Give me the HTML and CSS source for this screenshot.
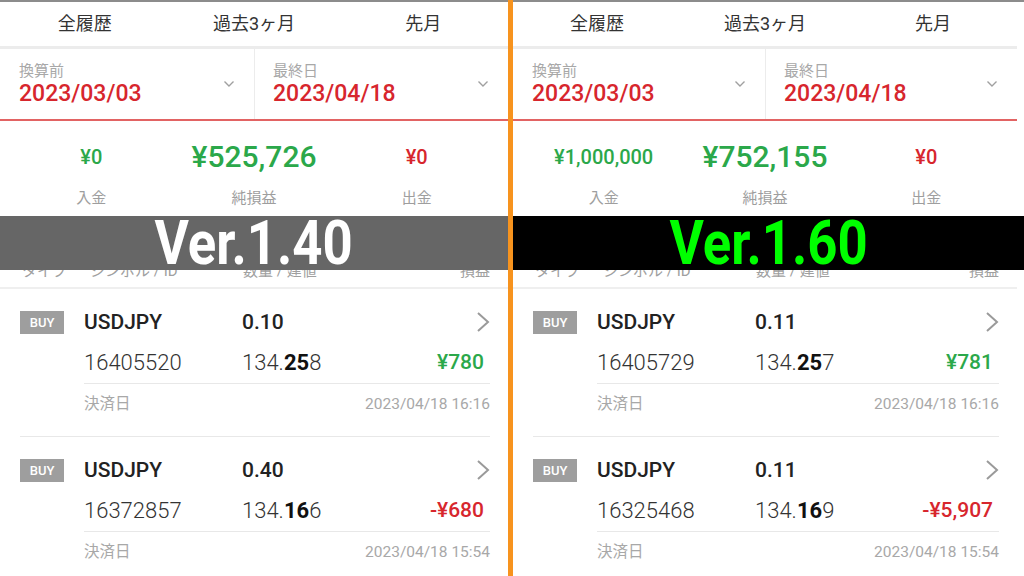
FILE: index.html
```html
<!DOCTYPE html>
<html lang="ja">
<head>
    <meta charset="UTF-8">
    <title>取引履歴 Ver.1.40 / Ver.1.60</title>
    <link rel="stylesheet" href="styles.css">
</head>
<body>
    <div class="screen">
        <section class="panel panel-left">
            <nav class="tabs">
                <span>全履歴</span>
                <span>過去3ヶ月</span>
                <span>先月</span>
            </nav>
            <div class="range">
                <div class="range-item">
                    <div class="range-text">
                        <span class="range-label">換算前</span>
                        <span class="range-date">2023/03/03</span>
                    </div>
                    <svg class="caret" width="10" height="6" viewBox="0 0 10 6"><polyline points="0.5,0.5 5,5 9.5,0.5"/></svg>
                </div>
                <div class="range-item">
                    <div class="range-text">
                        <span class="range-label">最終日</span>
                        <span class="range-date">2023/04/18</span>
                    </div>
                    <svg class="caret" width="10" height="6" viewBox="0 0 10 6"><polyline points="0.5,0.5 5,5 9.5,0.5"/></svg>
                </div>
            </div>
            <div class="summary">
                <div class="summary-col">
                    <span class="amount green">¥0</span>
                    <span class="summary-label">入金</span>
                </div>
                <div class="summary-col">
                    <span class="amount big green">¥525,726</span>
                    <span class="summary-label">純損益</span>
                </div>
                <div class="summary-col">
                    <span class="amount red">¥0</span>
                    <span class="summary-label">出金</span>
                </div>
            </div>
            <div class="list-head">
                <span class="head-type">タイプ</span>
                <span class="head-symbol">シンボル / ID</span>
                <span class="head-qty">数量 / 建値</span>
                <span>損益</span>
            </div>

            <div class="trade">
                <span class="badge">BUY</span>
                <div class="trade-body">
                    <div class="line1">
                        <span class="symbol">USDJPY</span>
                        <span class="qty">0.10</span>
                        <svg class="arrow" width="14" height="22" viewBox="0 0 14 22"><polyline points="2,2 12,11 2,20"/></svg>
                    </div>
                    <div class="line2">
                        <span class="trade-id">16405520</span>
                        <span class="price">134.<b>25</b>8</span>
                        <span class="profit green">¥780</span>
                    </div>
                    <div class="line3">
                        <span>決済日</span>
                        <span>2023/04/18 16:16</span>
                    </div>
                </div>
            </div>

            <div class="trade">
                <span class="badge">BUY</span>
                <div class="trade-body">
                    <div class="line1">
                        <span class="symbol">USDJPY</span>
                        <span class="qty">0.40</span>
                        <svg class="arrow" width="14" height="22" viewBox="0 0 14 22"><polyline points="2,2 12,11 2,20"/></svg>
                    </div>
                    <div class="line2">
                        <span class="trade-id">16372857</span>
                        <span class="price">134.<b>16</b>6</span>
                        <span class="profit red">-¥680</span>
                    </div>
                    <div class="line3">
                        <span>決済日</span>
                        <span>2023/04/18 15:54</span>
                    </div>
                </div>
            </div>

            <div class="banner banner-old"><span>Ver.1.40</span></div>
        </section>

        <div class="divider"></div>

        <section class="panel panel-right">
            <nav class="tabs">
                <span>全履歴</span>
                <span>過去3ヶ月</span>
                <span>先月</span>
            </nav>
            <div class="range">
                <div class="range-item">
                    <div class="range-text">
                        <span class="range-label">換算前</span>
                        <span class="range-date">2023/03/03</span>
                    </div>
                    <svg class="caret" width="10" height="6" viewBox="0 0 10 6"><polyline points="0.5,0.5 5,5 9.5,0.5"/></svg>
                </div>
                <div class="range-item">
                    <div class="range-text">
                        <span class="range-label">最終日</span>
                        <span class="range-date">2023/04/18</span>
                    </div>
                    <svg class="caret" width="10" height="6" viewBox="0 0 10 6"><polyline points="0.5,0.5 5,5 9.5,0.5"/></svg>
                </div>
            </div>
            <div class="summary">
                <div class="summary-col">
                    <span class="amount green">¥1,000,000</span>
                    <span class="summary-label">入金</span>
                </div>
                <div class="summary-col">
                    <span class="amount big green">¥752,155</span>
                    <span class="summary-label">純損益</span>
                </div>
                <div class="summary-col">
                    <span class="amount red">¥0</span>
                    <span class="summary-label">出金</span>
                </div>
            </div>
            <div class="list-head">
                <span class="head-type">タイプ</span>
                <span class="head-symbol">シンボル / ID</span>
                <span class="head-qty">数量 / 建値</span>
                <span>損益</span>
            </div>

            <div class="trade">
                <span class="badge">BUY</span>
                <div class="trade-body">
                    <div class="line1">
                        <span class="symbol">USDJPY</span>
                        <span class="qty">0.11</span>
                        <svg class="arrow" width="14" height="22" viewBox="0 0 14 22"><polyline points="2,2 12,11 2,20"/></svg>
                    </div>
                    <div class="line2">
                        <span class="trade-id">16405729</span>
                        <span class="price">134.<b>25</b>7</span>
                        <span class="profit green">¥781</span>
                    </div>
                    <div class="line3">
                        <span>決済日</span>
                        <span>2023/04/18 16:16</span>
                    </div>
                </div>
            </div>

            <div class="trade">
                <span class="badge">BUY</span>
                <div class="trade-body">
                    <div class="line1">
                        <span class="symbol">USDJPY</span>
                        <span class="qty">0.11</span>
                        <svg class="arrow" width="14" height="22" viewBox="0 0 14 22"><polyline points="2,2 12,11 2,20"/></svg>
                    </div>
                    <div class="line2">
                        <span class="trade-id">16325468</span>
                        <span class="price">134.<b>16</b>9</span>
                        <span class="profit red">-¥5,907</span>
                    </div>
                    <div class="line3">
                        <span>決済日</span>
                        <span>2023/04/18 15:54</span>
                    </div>
                </div>
            </div>

            <div class="banner banner-new"><span>Ver.1.60</span></div>
        </section>
    </div>
</body>
</html>
```

FILE: styles.css
```css
body {
    margin: 0;
    font-family: Roboto, "Noto Sans CJK JP", sans-serif;
    background-color: #fff;
    color: #222;
}

.screen {
    display: flex;
    width: 1024px;
    height: 576px;
    overflow: hidden;
}

.panel {
    position: relative;
    border-top: 2px solid #8c8c8c;
    overflow: hidden;
}

.panel-left {
    width: 508px;
}

.panel-right {
    flex: 1;
    padding-right: 7px;
}

.divider {
    width: 5px;
    background-color: #f7931e;
}

/* tabs */
.tabs {
    display: flex;
    height: 44px;
    border-bottom: 3px solid #ececec;
}

.tabs span {
    flex: 1;
    text-align: center;
    line-height: 44px;
    font-size: 18px;
    color: #333;
}

/* date range */
.range {
    display: flex;
    height: 70px;
    border-bottom: 2px solid #e26363;
}

.range-item {
    flex: 1;
    display: flex;
    align-items: center;
    padding: 0 20px 0 19px;
}

.range-item + .range-item {
    border-left: 1px solid #ececec;
    padding-left: 18px;
}

.range-text {
    flex: 1;
    display: flex;
    flex-direction: column;
}

.range-label {
    font-size: 15px;
    line-height: 20px;
    color: #a8a8a8;
}

.range-date {
    font-size: 23px;
    line-height: 26px;
    font-weight: 500;
    color: #d7262d;
}

.caret {
    fill: none;
    stroke: #a0a0a0;
    stroke-width: 1.4;
}

/* summary */
.summary {
    display: flex;
    height: 134px;
    padding: 18px 10px 0;
    box-sizing: border-box;
}

.summary-col {
    flex: 1;
    display: flex;
    flex-direction: column;
    align-items: center;
}

.amount {
    height: 36px;
    line-height: 36px;
    font-size: 20px;
    font-weight: 500;
}

.amount.big {
    font-size: 30px;
}

.summary-label {
    margin-top: 12px;
    line-height: 22px;
    font-size: 15px;
    color: #9e9e9e;
}

.green {
    color: #2ba84a;
}

.red {
    color: #d7262d;
}

/* list */
.list-head {
    display: flex;
    height: 32px;
    line-height: 32px;
    padding: 0 18px 0 22px;
    border-bottom: 2px solid #efefef;
    font-size: 15px;
    color: #a0a0a0;
}

.head-type {
    width: 68px;
}

.head-symbol {
    width: 153px;
}

.head-qty {
    flex: 1;
}

.trade {
    display: flex;
    margin: 0 18px 0 20px;
    padding: 21px 0 22px;
    border-bottom: 1px solid #e8e8e8;
}

.badge {
    width: 44px;
    height: 23px;
    margin: 1px 20px 0 0;
    background-color: #9e9e9e;
    color: #fff;
    font-size: 13px;
    font-weight: 500;
    line-height: 23px;
    text-align: center;
}

.trade-body {
    flex: 1;
}

.line1 {
    display: flex;
    align-items: center;
    height: 24px;
}

.symbol {
    width: 158px;
    font-size: 21px;
    font-weight: 500;
}

.qty {
    flex: 1;
    font-size: 21px;
    font-weight: 500;
}

.arrow {
    fill: none;
    stroke: #9a9a9a;
    stroke-width: 2;
}

.line2 {
    display: flex;
    align-items: center;
    height: 28px;
    margin-top: 14px;
    font-size: 22px;
    font-weight: 300;
    color: #333;
}

.trade-id {
    width: 158px;
}

.price {
    flex: 1;
}

.price b {
    font-weight: 700;
    color: #111;
}

.profit {
    padding-right: 6px;
    font-size: 21px;
    font-weight: 500;
}

.line3 {
    display: flex;
    justify-content: space-between;
    margin-top: 7px;
    padding-top: 10px;
    border-top: 1px solid #e8e8e8;
    line-height: 20px;
    font-size: 15.5px;
    color: #a8a8a8;
}

/* version label over the screenshot */
.banner {
    position: absolute;
    top: 214px;
    left: 0;
    right: 0;
    height: 54px;
    line-height: 54px;
    text-align: center;
    font-size: 62px;
    font-weight: 700;
}

.banner span {
    display: inline-block;
    transform: scaleX(0.85);
}

.banner-old {
    background-color: #666;
    color: #fff;
}

.banner-new {
    background-color: #000;
    color: #00ff00;
}
```
